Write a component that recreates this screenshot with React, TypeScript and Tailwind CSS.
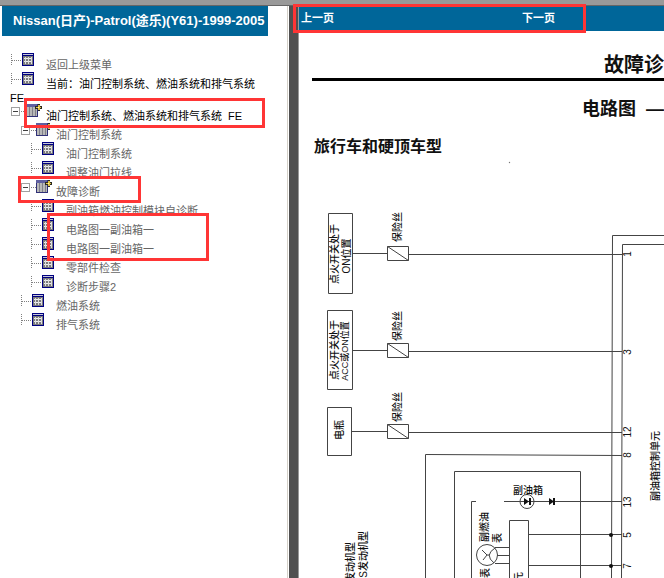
import { type ReactNode } from "react"

interface ITreeNode {
    label: string;
    level: number;
    type: "leaf" | "branch";
    active?: boolean;
}

const treeNodes: ITreeNode[] = [
    { label: "油门控制系统、燃油系统和排气系统\u00a0\u00a0FE", level: 0, type: "branch", active: true },
    { label: "油门控制系统", level: 1, type: "branch" },
    { label: "油门控制系统", level: 2, type: "leaf" },
    { label: "调整油门拉线", level: 2, type: "leaf" },
    { label: "故障诊断", level: 1, type: "branch" },
    { label: "副油箱燃油控制模块自诊断", level: 2, type: "leaf" },
    { label: "电路图一副油箱一", level: 2, type: "leaf" },
    { label: "电路图一副油箱一", level: 2, type: "leaf" },
    { label: "零部件检查", level: 2, type: "leaf" },
    { label: "诊断步骤2", level: 2, type: "leaf" },
    { label: "燃油系统", level: 1, type: "leaf" },
    { label: "排气系统", level: 1, type: "leaf" },
]

const indents = ["pl-[11px]", "pl-[21px]", "pl-[31px]"]

function LeafIcon() {
    return (
        <svg className="h-[19px] w-[35px] shrink-0" viewBox="0 0 35 19" shapeRendering="crispEdges" aria-hidden="true">
            <path d="M0.5 1V13M1 7.5H11" stroke="#808080" strokeDasharray="1 1" fill="none" />
            <rect x="11" y="0" width="12" height="13" fill="#000080" />
            <rect x="12" y="1" width="10" height="1" fill="#c8c8d8" />
            <rect x="12" y="3" width="10" height="9" fill="#7c7c7c" />
            <path d="M13 5.5H21M13 8.5H21" stroke="#f0f0f0" />
            <path d="M14.5 4V11M17.5 4V11M20.5 4V11" stroke="#dcdcdc" />
        </svg>
    )
}

function BranchIcon() {
    return (
        <svg className="h-[19px] w-[35px] shrink-0" viewBox="0 0 35 19" shapeRendering="crispEdges" aria-hidden="true">
            <rect x="0.5" y="3.5" width="8" height="8" fill="#fff" stroke="#a0a0a0" />
            <path d="M2 7.5H7" stroke="#404040" />
            <path d="M10 7.5H16" stroke="#808080" strokeDasharray="1 1" />
            <rect x="15" y="0" width="12" height="13" fill="#303078" />
            <rect x="15" y="0" width="11" height="3" fill="#6060a0" />
            <rect x="16" y="3" width="10" height="9" fill="#b8b8b8" />
            <path d="M18.5 3V12M21.5 3V12M24.5 3V12" stroke="#808088" />
            <path d="M27 0H29V2H31V5H29V7H27V5H24V2H27Z" fill="#282820" />
            <path d="M27 1H29V3H30V4H29V6H27V4H25V3H27Z" fill="#e0c040" />
            <rect x="27" y="3" width="1" height="1" fill="#fff8c0" />
        </svg>
    )
}

function TreeRow({ label, level, type, active }: ITreeNode) {
    return (
        <li className={`flex h-[19px] ${indents[level]}`}>
            {type === "leaf" ? <LeafIcon /> : <BranchIcon />}
            <a href="#" className={`whitespace-nowrap pt-[3px] leading-[19px] ${active ? "text-black" : "text-[#666666]"}`}>{label}</a>
        </li>
    )
}

function Sidebar() {
    return (
        <aside className="relative w-[288px] shrink-0 border-r border-[#d4d0c8] bg-white text-[11px]">
            <h1 className="ml-0.5 mr-[19px] bg-[#006699] pl-[11px] text-[13px] font-bold leading-[30px] whitespace-nowrap text-white">
                Nissan(日产)-Patrol(途乐)(Y61)-1999-2005
            </h1>
            <nav className="pt-[17px]">
                <ul>
                    <TreeRow label="返回上级菜单" level={0} type="leaf" />
                    <TreeRow label="当前：油门控制系统、燃油系统和排气系统" level={0} type="leaf" active />
                    <li className="h-[13px] pl-[10px] leading-[15px] text-black">FE</li>
                    {treeNodes.map((node, i) => <TreeRow key={i} {...node} />)}
                </ul>
            </nav>
            {/* Highlight frames */}
            <div className="pointer-events-none absolute left-6 top-[92px] h-[30px] w-[241px] border-3 border-[#ff3535]" />
            <div className="pointer-events-none absolute left-[18px] top-[170px] h-[27px] w-[123px] border-3 border-[#ff3535]" />
            <div className="pointer-events-none absolute left-[47px] top-[207px] h-12 w-[162px] border-3 border-[#ff3535]" />
        </aside>
    )
}

interface IVText {
    x: number;
    y: number;
    size?: number;
    anchor?: "middle" | "end";
    children: ReactNode;
}

// text that reads from bottom to top, centred on x
function VText({ x, y, size = 10, anchor = "middle", children }: IVText) {
    return (
        <text transform={`translate(${x} ${y}) rotate(-90)`} fontSize={size} textAnchor={anchor} dy="0.37em">{children}</text>
    )
}

const fuses = [
    { y: 254, label: 227 },
    { y: 351, label: 326 },
    { y: 432, label: 407 },
]

const pins = [
    { pin: "1", y: 254 },
    { pin: "3", y: 352 },
    { pin: "12", y: 432 },
    { pin: "8", y: 455 },
    { pin: "13", y: 502 },
    { pin: "5", y: 535 },
    { pin: "7", y: 566 },
]

function WiringDiagram() {
    return (
        <svg className="block shrink-0 font-medium" width="365" height="421" viewBox="299 157 365 421" fill="#111" role="img" aria-label="电路图">
            <g fill="none" stroke="#444" strokeWidth="1">
                <path d="M328.5 213.5H352.5V293.5H328.5ZM327.5 310.5H352.5V389.5H327.5ZM327.5 407.5H351.5V455.5H327.5Z" />
                {fuses.map(({ y }) => (
                    <path key={y} d={`M352 ${y - 0.5}H387M408 ${y + 0.5}H622M387.5 ${y - 7.5}H408.5V${y + 6.5}H387.5ZM387.5 ${y - 7.5}L408.5 ${y + 6.5}`} />
                ))}
                <path d="M664 235.5H612.5L611.5 578M664 244.5H622.5L621.5 578" />
                <path d="M425.5 578V454.5L622 455.5" />
                <path d="M454.5 578V471.5H580.5V578" />
                <path d="M476 501.5H471.5V578M504 501.5H622" />
                <circle cx="527" cy="501.5" r="7" />
                <path d="M509.5 578V520.5H528.5V578M528 534.5H622M528 565.5H622" />
                <circle cx="487" cy="555" r="10.5" />
                <path d="M495 547.5H509M497 555.5H509M495 563.5H509M495 548Q484 555 494 563M490 555H487L482 550M487 555L483 560" />
            </g>
            <path d="M524 498L529 501.5L524 505ZM529 498H531V505H529ZM549 498L554 501.5L549 505ZM553 498H555V505H553Z" fill="#111" />
            <circle cx="611" cy="535" r="2" />
            <circle cx="611" cy="566" r="2" />
            <circle cx="509.5" cy="162.5" r="0.7" fill="#777" />
            <VText x={334} y={254}>点火开关处于</VText>
            <VText x={346} y={256}>ON位置</VText>
            <VText x={334} y={350}>点火开关处于</VText>
            <VText x={345} y={351} size={9}>ACC或ON位置</VText>
            <VText x={339} y={430}>电瓶</VText>
            {fuses.map(({ label }) => <VText key={label} x={397} y={label}>保险丝</VText>)}
            {pins.map(({ pin, y }) => <VText key={pin} x={627} y={y}>{pin}</VText>)}
            <VText x={655} y={466}>副油箱控制单元</VText>
            <text x="528" y="494" fontSize="10" textAnchor="middle">副油箱</text>
            <VText x={484} y={527}>副燃油</VText>
            <VText x={497} y={538}>表</VText>
            <VText x={485} y={573}>表</VText>
            <VText x={518} y={577}>元</VText>
            <VText x={350} y={542} anchor="end">发动机型</VText>
            <VText x={363} y={531} anchor="end">S发动机型</VText>
        </svg>
    )
}

function Content() {
    return (
        <main className="relative flex min-w-0 flex-1 flex-col bg-white text-black">
            <nav className="flex h-[25px] shrink-0 items-center bg-[#006699] pl-0.5 text-[11px] font-bold text-white">
                <a href="#" className="w-[221px]">上一页</a>
                <a href="#">下一页</a>
            </nav>
            <section className="flex flex-1 flex-col overflow-hidden">
                <h2 className="ml-[13px] border-b-3 border-black pt-6 pb-[3px] text-right text-[20px] font-bold leading-5 text-[#111]">故障诊</h2>
                <h3 className="mt-[18px] text-right text-[18px] font-bold leading-5 text-[#111]">电路图&nbsp; —</h3>
                <h4 className="mt-[18px] pl-[15px] text-[16px] font-bold leading-5 text-[#111]">旅行车和硬顶车型</h4>
                <WiringDiagram />
            </section>
            <div className="pointer-events-none absolute -left-1.5 -top-0.5 h-[29px] w-[293px] border-3 border-[#ff3535]" />
        </main>
    )
}

export default function App() {
    return (
        <div className="flex h-screen flex-col overflow-hidden bg-white font-['Liberation_Sans','Noto_Sans_CJK_SC',sans-serif]">
            <div className="h-1.5 shrink-0 border-b border-[#666666] bg-[#999999]" />
            <div className="flex min-h-0 flex-1">
                <Sidebar />
                <div className="w-[11px] shrink-0 border-x border-l-white border-r-[#999999] bg-[#505050]" />
                <Content />
            </div>
        </div>
    )
}
